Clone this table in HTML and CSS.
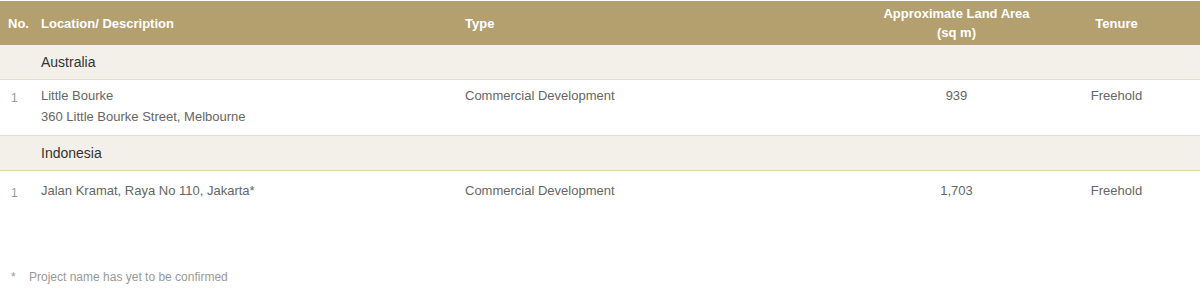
FILE: index.html
```html
<!DOCTYPE html>
<html>
<head>
<meta charset="utf-8">
<link rel="stylesheet" href="styles.css">
</head>
<body>
<div class="wrap">
  <table class="land">
    <colgroup>
      <col class="c-no"><col class="c-loc"><col class="c-type"><col class="c-area"><col class="c-ten">
    </colgroup>
    <thead>
      <tr>
        <th class="no">No.</th>
        <th>Location/ Description</th>
        <th>Type</th>
        <th class="ctr">Approximate Land Area<br>(sq m)</th>
        <th class="ctr">Tenure</th>
      </tr>
    </thead>
    <tbody>
      <tr class="sect first">
        <td></td>
        <td colspan="4">Australia</td>
      </tr>
      <tr class="row r1">
        <td class="no">1</td>
        <td>Little Bourke<br>360 Little Bourke Street, Melbourne</td>
        <td>Commercial Development</td>
        <td class="ctr">939</td>
        <td class="ctr">Freehold</td>
      </tr>
      <tr class="sect second">
        <td></td>
        <td colspan="4">Indonesia</td>
      </tr>
      <tr class="row r2">
        <td class="no">1</td>
        <td>Jalan Kramat, Raya No 110, Jakarta*</td>
        <td>Commercial Development</td>
        <td class="ctr">1,703</td>
        <td class="ctr">Freehold</td>
      </tr>
    </tbody>
  </table>
  <p class="note"><span class="star">*</span><span>Project name has yet to be confirmed</span></p>
</div>
</body>
</html>
```

FILE: styles.css
```css
html, body {
  margin: 0;
  padding: 0;
  background: #fff;
}
.wrap {
  padding-top: 1px;
  width: 1200px;
  font-family: "Liberation Sans", Arial, sans-serif;
}
.land {
  width: 1200px;
  border-collapse: collapse;
  table-layout: fixed;
}
.c-no { width: 33px; }
.c-loc { width: 424px; }
.c-type { width: 423px; }
.c-area { width: 153px; }
.c-ten { width: 167px; }

.land th {
  background: #b3a06e;
  color: #fff;
  font-weight: bold;
  font-size: 13px;
  line-height: 19px;
  text-align: left;
  vertical-align: middle;
  height: 44px;
  padding: 0 8px;
  box-sizing: border-box;
  white-space: nowrap;
}
.land th.no { padding-left: 8px; padding-right: 0; }
.land th.ctr { padding: 0; }
.land .ctr { text-align: center; }

.sect td {
  background: #f3f0e9;
  color: #333;
  font-size: 14px;
  height: 34px;
  padding: 0 8px;
  vertical-align: middle;
}
.sect.first td { border-bottom: 1px solid #e3ded2; }
.sect.second td {
  border-top: 1px solid #e3ddcc;
  border-bottom: 1px solid #e2d6b6;
}

.row td {
  color: #666;
  font-size: 13px;
  line-height: 21px;
  vertical-align: top;
  padding: 5px 8px 8px;
}
.row td.no {
  font-size: 12px;
  color: #999;
  padding-top: 8px;
  padding-left: 11px;
  padding-right: 0;
}
.r1 td { border-bottom: 1px solid #e3ded4; }
.r2 td { padding-top: 9px; }
.r2 td.no { padding-top: 12px; }

.note {
  margin: 58px 0 0;
  font-family: "Liberation Sans", Arial, sans-serif;
  font-size: 12px;
  color: #999;
  display: flex;
  line-height: 14px;
}
.note .star {
  width: 18px;
  padding-left: 11px;
  box-sizing: content-box;
}
```
